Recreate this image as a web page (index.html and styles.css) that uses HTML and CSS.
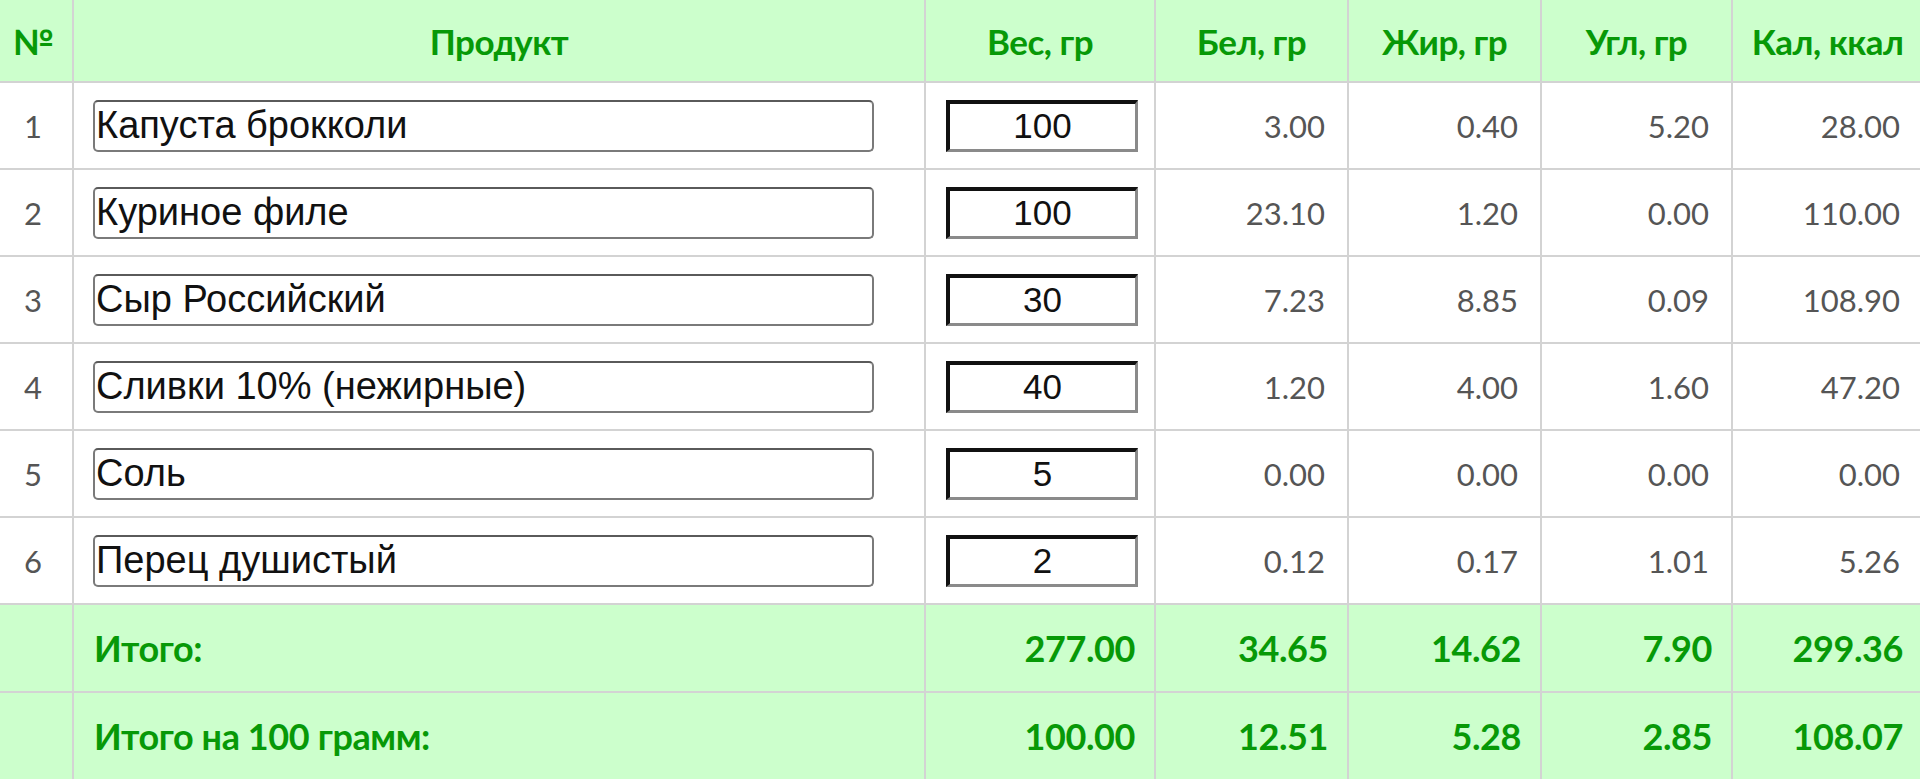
FILE: index.html
```html
<!DOCTYPE html>
<html lang="ru">
<head>
<meta charset="utf-8">
<title>Калькулятор калорий</title>
<link rel="stylesheet" href="styles.css">
</head>
<body>
<table class="calc">
  <colgroup>
    <col class="c-num"><col class="c-prod"><col class="c-w"><col class="c-n"><col class="c-n"><col class="c-n2"><col class="c-n2">
  </colgroup>
  <thead>
    <tr class="head">
      <th>№</th><th>Продукт</th><th>Вес, гр</th><th>Бел, гр</th><th>Жир, гр</th><th>Угл, гр</th><th>Кал, ккал</th>
    </tr>
  </thead>
  <tbody>
    <tr class="item"><td class="idx">1</td><td class="pcell"><input class="prod" type="text" value="Капуста брокколи"></td><td class="wcell"><input class="weight" type="text" value="100"></td><td class="val">3.00</td><td class="val">0.40</td><td class="val">5.20</td><td class="val">28.00</td></tr>
    <tr class="item"><td class="idx">2</td><td class="pcell"><input class="prod" type="text" value="Куриное филе"></td><td class="wcell"><input class="weight" type="text" value="100"></td><td class="val">23.10</td><td class="val">1.20</td><td class="val">0.00</td><td class="val">110.00</td></tr>
    <tr class="item"><td class="idx">3</td><td class="pcell"><input class="prod" type="text" value="Сыр Российский"></td><td class="wcell"><input class="weight" type="text" value="30"></td><td class="val">7.23</td><td class="val">8.85</td><td class="val">0.09</td><td class="val">108.90</td></tr>
    <tr class="item"><td class="idx">4</td><td class="pcell"><input class="prod" type="text" value="Сливки 10% (нежирные)"></td><td class="wcell"><input class="weight" type="text" value="40"></td><td class="val">1.20</td><td class="val">4.00</td><td class="val">1.60</td><td class="val">47.20</td></tr>
    <tr class="item"><td class="idx">5</td><td class="pcell"><input class="prod" type="text" value="Соль"></td><td class="wcell"><input class="weight" type="text" value="5"></td><td class="val">0.00</td><td class="val">0.00</td><td class="val">0.00</td><td class="val">0.00</td></tr>
    <tr class="item"><td class="idx">6</td><td class="pcell"><input class="prod" type="text" value="Перец душистый"></td><td class="wcell"><input class="weight" type="text" value="2"></td><td class="val">0.12</td><td class="val">0.17</td><td class="val">1.01</td><td class="val">5.26</td></tr>
  </tbody>
  <tfoot>
    <tr class="total"><td></td><td class="label">Итого:</td><td class="val">277.00</td><td class="val">34.65</td><td class="val">14.62</td><td class="val">7.90</td><td class="val">299.36</td></tr>
    <tr class="total"><td></td><td class="label">Итого на 100 грамм:</td><td class="val">100.00</td><td class="val">12.51</td><td class="val">5.28</td><td class="val">2.85</td><td class="val">108.07</td></tr>
  </tfoot>
</table>
</body>
</html>
```

FILE: styles.css
```css
html, body {
  margin: 0;
  padding: 0;
  background: #ffffff;
  overflow: hidden;
}

.calc {
  border-collapse: collapse;
  table-layout: fixed;
  width: 1930px;
  margin-left: -8px;
  font-family: Lato, "Open Sans", "Noto Sans", sans-serif;
}

.c-num { width: 80px; }
.c-prod { width: 852px; }
.c-w { width: 230px; }
.c-n { width: 193px; }
.c-n2 { width: 191px; }

.calc th,
.calc td {
  border: 2px solid #d3d3d3;
  padding: 0 22px;
}

.head {
  height: 82px;
  background: #ccffcc;
}

.head th {
  border-top: none;
  color: #079907;
  font-weight: 700;
  font-size: 35px;
  letter-spacing: -0.5px;
  text-align: center;
  padding: 0 2px;
}

.item {
  height: 87px;
}

.idx {
  text-align: center;
  color: #555555;
  font-size: 31px;
  padding: 0 0 0 8px;
}

.calc td.pcell {
  padding-left: 19px;
}

.calc td.val {
  text-align: right;
  color: #555555;
  font-size: 31px;
}

.prod {
  display: block;
  box-sizing: border-box;
  width: 781px;
  height: 52px;
  margin: 0;
  padding: 0 1px;
  border: 2px solid #7a7a7a;
  border-top-color: #5a5a5a;
  border-radius: 5px;
  font-family: "Liberation Sans", Arial, sans-serif;
  font-size: 38px;
  color: #111111;
  background: #ffffff;
}

.calc td.wcell {
  text-align: center;
  padding: 0 10px 0 14px;
}

.weight {
  box-sizing: border-box;
  width: 192px;
  height: 52px;
  margin: 0;
  padding: 0;
  border-style: solid;
  border-width: 4px 3px 3px 4px;
  border-color: #111111 #8a8a8a #8a8a8a #111111;
  font-family: "Liberation Sans", Arial, sans-serif;
  font-size: 35px;
  text-align: center;
  color: #111111;
  background: #ffffff;
}

.total {
  height: 88px;
  background: #ccffcc;
}

.calc .total td {
  color: #079907;
  font-weight: 700;
  font-size: 36px;
  letter-spacing: -0.4px;
}

.calc .total td.val {
  color: #079907;
  font-size: 36px;
  padding-right: 19px;
}

.calc .total td.label {
  text-align: left;
  padding-left: 20px;
}
```
